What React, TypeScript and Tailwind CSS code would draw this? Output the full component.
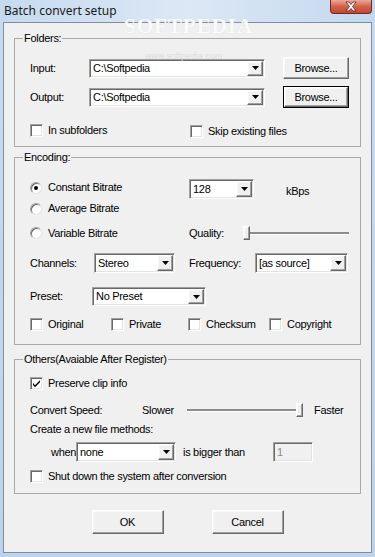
import React from 'react';

const sunken = 'border border-t-[#a0a0a0] border-l-[#a0a0a0] border-r-white border-b-white shadow-[inset_1px_1px_0_#696969,inset_-1px_-1px_0_#e3e3e3]';
const raised = 'border border-t-white border-l-white border-r-[#696969] border-b-[#696969] shadow-[inset_-1px_-1px_0_#a0a0a0,inset_1px_1px_0_#f8f8f8]';

function Arrow() {
  return (
    <svg width="7" height="4" viewBox="0 0 7 4">
      <path d="M0 0h7L3.5 4z" fill="#000" />
    </svg>
  );
}

function Combo({ className, value }: { className: string; value: string }) {
  return (
    <div className={`shrink-0 flex bg-white ${sunken} ${className}`}>
      <div className="flex-1 flex items-center pl-[3px] overflow-hidden whitespace-nowrap">{value}</div>
      <div className={`w-[16px] m-[1px] flex items-center justify-center bg-[#f0f0f0] ${raised}`}>
        <Arrow />
      </div>
    </div>
  );
}

function Btn({ className, children, isDefault }: { className: string; children: React.ReactNode; isDefault?: boolean }) {
  return (
    <div className={`shrink-0 ${isDefault ? 'border border-black' : ''} ${className}`}>
      <div className={`w-full h-full flex items-center justify-center bg-[#f0f0f0] ${raised}`}>{children}</div>
    </div>
  );
}

function Check({ checked, label, className = '' }: { checked?: boolean; label: string; className?: string }) {
  return (
    <div className={`flex items-center shrink-0 ${className}`}>
      <div className={`w-[13px] h-[13px] bg-white flex items-center justify-center ${sunken}`}>
        {checked && (
          <svg width="9" height="9" viewBox="0 0 9 9">
            <path d="M1 4l2 2.2L8 1.2v2L3 8.3 1 6z" fill="#000" />
          </svg>
        )}
      </div>
      <span className="ml-[5px] whitespace-nowrap">{label}</span>
    </div>
  );
}

function Radio({ checked, label }: { checked?: boolean; label: string }) {
  return (
    <div className="flex items-center">
      <div className="w-[12px] h-[12px] rounded-full bg-white border border-t-[#a0a0a0] border-l-[#a0a0a0] border-r-[#e3e3e3] border-b-[#e3e3e3] shadow-[inset_1px_1px_0_#696969] flex items-center justify-center">
        {checked && <div className="w-[4px] h-[4px] rounded-full bg-black" />}
      </div>
      <span className="ml-[6px] whitespace-nowrap">{label}</span>
    </div>
  );
}

function Slider({ className, right }: { className: string; right?: boolean }) {
  return (
    <div className={`relative h-[14px] flex items-center shrink-0 ${className}`}>
      <div className="w-full h-[3px] bg-[#8c8c8c] border-b border-white" />
      <div className={`absolute top-0 ${right ? 'right-0' : 'left-0'} w-[7px] h-[14px] bg-[#f0f0f0] ${raised}`} />
    </div>
  );
}

function Group({ title, className, children }: { title: string; className: string; children: React.ReactNode }) {
  return (
    <fieldset className={`mx-[10px] border border-[#a9a9a9] p-0 ${className}`}>
      <legend className="ml-[8px] px-[1px] leading-[13px]">{title}</legend>
      {children}
    </fieldset>
  );
}

export default function App() {
  return (
    <div className="relative w-[375px] h-[557px] overflow-hidden bg-gradient-to-b from-[#c7dbf0] to-[#bdd3ea] font-['Liberation_Sans',Arial,sans-serif] text-[11px] tracking-[-0.3px] leading-[13px] text-black">
      <div className="h-[22px] flex items-center pl-[4px] pb-[2px] bg-gradient-to-r from-[#c6daef] via-[#dce8f5] to-[#c3d8ee] font-['Noto_Sans',sans-serif] text-[12px] tracking-normal text-[#1a1a1a]">
        Batch convert setup
      </div>
      <div className="absolute top-0 right-[3px] w-[42px] h-[14px] rounded-b-[4px] border border-t-0 border-[#6e2a1f] bg-gradient-to-b from-[#e9a99b] via-[#d2604a] to-[#c24a32] flex items-center justify-center">
        <svg width="14" height="11" viewBox="0 0 14 11">
          <path d="M2 1h3l2 2.5L9 1h3L8.5 5.5 12 10H9L7 7.5 5 10H2l3.5-4.5z" fill="#fff" stroke="#5a2018" strokeWidth="0.8" />
        </svg>
      </div>

      <div className="mx-[3px] h-[531px] border border-[#7f8fa3] bg-[#f0f0f0] flex flex-col">
        <Group title="Folders:" className="mt-[9px]">
          <div className="pl-[15px] pr-[10px] pb-[9px]">
            <div className="mt-[12px] flex items-center h-[22px]">
              <span className="w-[59px] shrink-0">Input:</span>
              <Combo className="w-[176px] h-[19px]" value={'C:\\Softpedia'} />
              <Btn className="ml-[18px] w-[66px] h-[22px]">Browse...</Btn>
            </div>
            <div className="mt-[7px] flex items-center h-[22px]">
              <span className="w-[59px] shrink-0">Output:</span>
              <Combo className="w-[176px] h-[19px]" value={'C:\\Softpedia'} />
              <Btn className="ml-[18px] w-[66px] h-[22px]" isDefault>Browse...</Btn>
            </div>
            <div className="mt-[16px] flex items-center h-[13px]">
              <Check label="In subfolders" className="w-[160px]" />
              <Check label="Skip existing files" className="mt-[2px]" />
            </div>
          </div>
        </Group>

        <Group title="Encoding:" className="mt-[4px]">
          <div className="pl-[15px] pr-[10px] pb-[13px]">
            <div className="mt-[15px] flex items-center h-[20px]">
              <div className="w-[159px] shrink-0 self-start mt-[2px]">
                <Radio checked label="Constant Bitrate" />
              </div>
              <Combo className="w-[65px] h-[20px]" value="128" />
              <span className="ml-[32px] mt-[4px]">kBps</span>
            </div>
            <div className="mt-[3px] flex items-center h-[13px]">
              <Radio label="Average Bitrate" />
            </div>
            <div className="mt-[11px] flex items-center h-[14px]">
              <div className="w-[159px] shrink-0">
                <Radio label="Variable Bitrate" />
              </div>
              <span className="w-[54px] shrink-0">Quality:</span>
              <Slider className="w-[106px]" />
            </div>
            <div className="mt-[13px] flex items-center h-[20px]">
              <span className="w-[64px] shrink-0">Channels:</span>
              <Combo className="w-[81px] h-[20px]" value="Stereo" />
              <span className="ml-[14px] w-[66px] shrink-0">Frequency:</span>
              <Combo className="w-[93px] h-[20px]" value="[as source]" />
            </div>
            <div className="mt-[14px] flex items-center h-[19px]">
              <span className="w-[62px] shrink-0">Preset:</span>
              <Combo className="w-[114px] h-[19px]" value="No Preset" />
            </div>
            <div className="mt-[12px] flex items-center h-[13px]">
              <Check label="Original" className="w-[81px]" />
              <Check label="Private" className="w-[77px]" />
              <Check label="Checksum" className="w-[81px]" />
              <Check label="Copyright" />
            </div>
          </div>
        </Group>

        <Group title="Others(Avaiable After Register)" className="mt-[8px]">
          <div className="pl-[15px] pr-[10px] pb-[10px]">
            <div className="mt-[11px] flex items-center h-[13px]">
              <Check checked label="Preserve clip info" />
            </div>
            <div className="mt-[13px] flex items-center h-[14px]">
              <span className="w-[112px] shrink-0">Convert Speed:</span>
              <span className="w-[45px] shrink-0">Slower</span>
              <Slider className="w-[116px]" right />
              <span className="ml-[11px]">Faster</span>
            </div>
            <div className="mt-[6px] flex items-center h-[13px]">Create a new file methods:</div>
            <div className="mt-[6px] flex items-center h-[20px] pl-[21px]">
              <span className="w-[25px] shrink-0">when</span>
              <Combo className="w-[100px] h-[20px]" value="none" />
              <span className="ml-[7px] w-[90px] shrink-0">is bigger than</span>
              <div className={`w-[40px] h-[20px] flex items-center pl-[3px] bg-[#f0f0f0] text-[#8a8a8a] ${sunken}`}>1</div>
            </div>
            <div className="mt-[8px] flex items-center h-[13px]">
              <Check label="Shut down the system after conversion" />
            </div>
          </div>
        </Group>

        <div className="mt-[16px] flex justify-center gap-[48px]">
          <Btn className="w-[72px] h-[24px]">OK</Btn>
          <Btn className="w-[72px] h-[24px]">Cancel</Btn>
        </div>
      </div>

      <div className="absolute left-[124px] top-[20px] font-['Liberation_Serif',serif] text-[21px] font-bold tracking-[1px] text-[#fafafa] [text-shadow:0_0_1px_#d8d8d8] pointer-events-none">
        SOFTPEDIA
      </div>
      <div className="absolute left-[145px] top-[50px] text-[9px] tracking-normal text-[#dcdcdc] pointer-events-none">
        www.softpedia.com
      </div>
    </div>
  );
}
